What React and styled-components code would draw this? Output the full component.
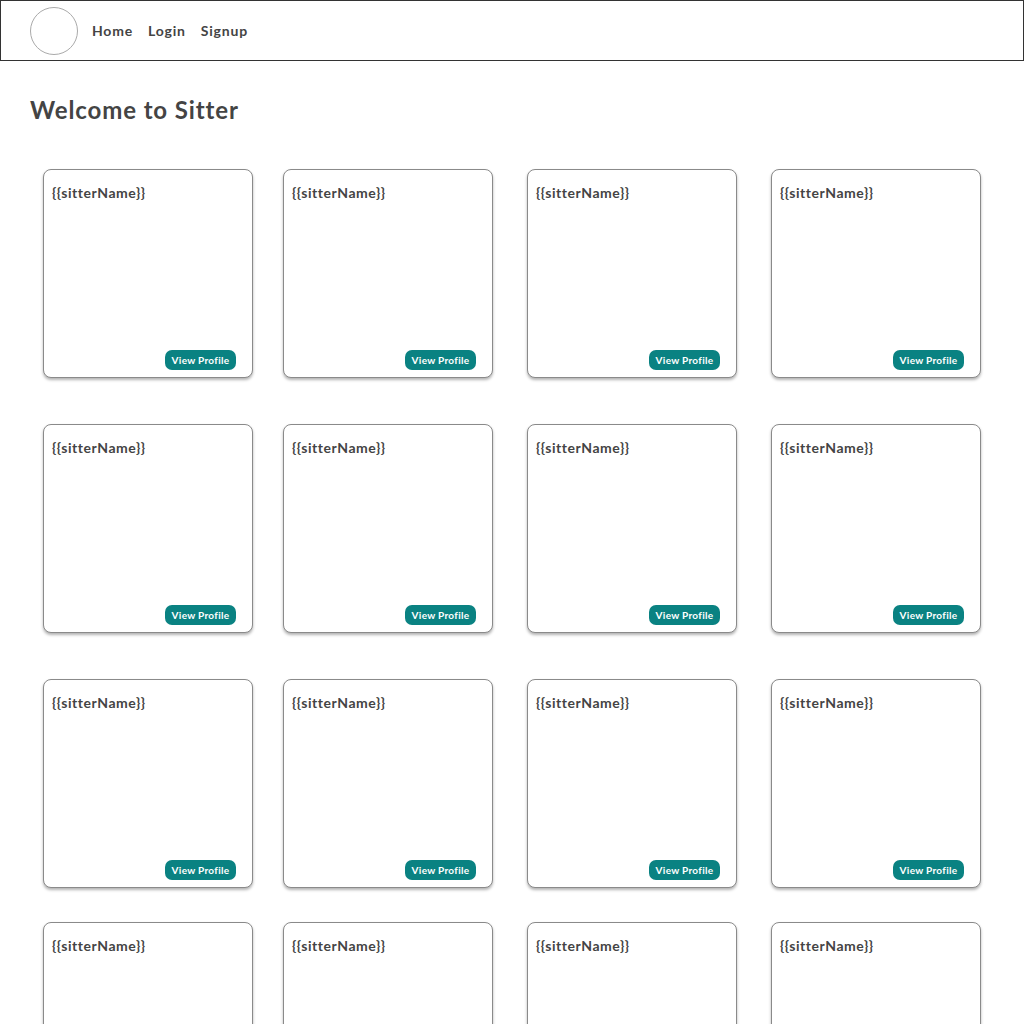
import React from "react";
import styled, { createGlobalStyle } from "styled-components";

const Global = createGlobalStyle`
  html, body { margin: 0; padding: 0; background: #fff; }
  body { font-family: Lato, "Open Sans", sans-serif; color: #444; }
  * { box-sizing: border-box; }
`;

const NavBar = styled.nav`
  height: 61px;
  border: 1px solid #333;
  display: flex;
  align-items: center;
  padding-left: 29px;
`;

const Logo = styled.div`
  width: 48px;
  height: 48px;
  border-radius: 50%;
  border: 1px solid #aaa;
  background: #fff;
  margin-right: 14px;
`;

const NavLink = styled.a`
  font-size: 14px;
  font-weight: 700;
  letter-spacing: 0.8px;
  color: #444;
  text-decoration: none;
  margin-right: 15px;
`;

const Main = styled.main`
  padding: 0 30px;
`;

const Title = styled.h1`
  margin: 35px 0 0 0;
  font-size: 24px;
  font-weight: 700;
  letter-spacing: 0.9px;
  line-height: 28px;
  color: #444;
`;

const Grid = styled.div`
  display: grid;
  grid-template-columns: 240px 244px 244px 244px;
  grid-template-rows: 255px 255px 243px 243px;
  margin-top: 45px;
  padding-left: 13px;
`;

const Card = styled.div`
  width: 210px;
  height: 209px;
  border: 1px solid #8a8a8a;
  border-radius: 8px;
  box-shadow: 0 2px 3px rgba(0, 0, 0, 0.3);
  background: #fff;
  display: flex;
  flex-direction: column;
  justify-content: space-between;
  padding: 14px 16px 7px 8px;
`;

const Name = styled.div`
  font-size: 14px;
  font-weight: 700;
  letter-spacing: 0.55px;
  color: #444;
  line-height: 18px;
`;

const Button = styled.button`
  align-self: flex-end;
  height: 20px;
  width: 71px;
  border: none;
  border-radius: 7px;
  background: #0a8282;
  color: #fff;
  font-family: Lato, sans-serif;
  font-size: 10px;
  font-weight: 700;
  letter-spacing: 0.3px;
  padding: 0;
  cursor: pointer;
`;

export default function App() {
  const cards = Array.from({ length: 16 });
  return (
    <>
      <Global />
      <NavBar>
        <Logo />
        <NavLink href="#">Home</NavLink>
        <NavLink href="#">Login</NavLink>
        <NavLink href="#">Signup</NavLink>
      </NavBar>
      <Main>
        <Title>Welcome to Sitter</Title>
        <Grid>
          {cards.map((_, i) => (
            <Card key={i}>
              <Name>{"{{sitterName}}"}</Name>
              <Button>View Profile</Button>
            </Card>
          ))}
        </Grid>
      </Main>
    </>
  );
}
